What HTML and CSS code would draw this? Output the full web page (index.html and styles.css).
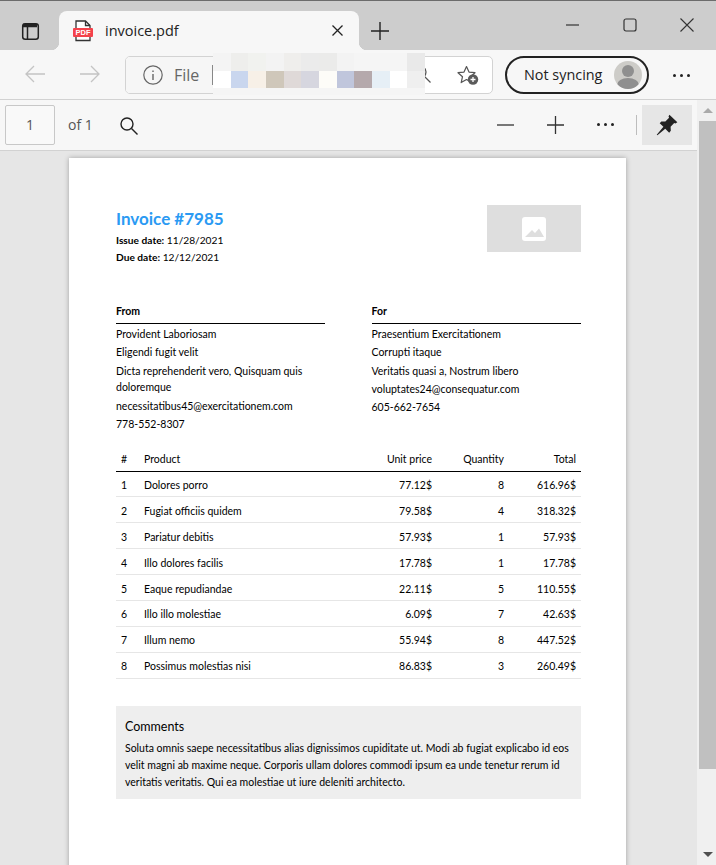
FILE: index.html
```html
<!DOCTYPE html>
<html lang="en">
<head>
    <meta charset="UTF-8">
    <title>invoice.pdf</title>
    <link rel="stylesheet" href="styles.css">
</head>
<body>
    <div class="titlebar">
        <div class="tab-actions">
            <svg width="20" height="20" viewBox="0 0 20 20" fill="none" stroke="#222" stroke-width="1.5"><rect x="2.7" y="2.7" width="15.6" height="15.6" rx="2.5"/><path d="M3 4.5h14" stroke-width="3.5"/><path d="M7.5 6v12"/></svg>
        </div>
        <div class="tab">
            <svg class="tab-icon" width="20" height="22" viewBox="0 0 20 22"><path d="M3 1h9.5L17 5.5V20.500H3z" fill="#fff" stroke="#333" stroke-width="1.300"/><path d="M12.500 1v4.500H17" fill="none" stroke="#333" stroke-width="1.300"/><rect x="0" y="8" width="20" height="9" rx="1" fill="#f4424b"/><text x="10" y="15.300" class="pdf-mark">PDF</text></svg>
            <span class="tab-title">invoice.pdf</span>
            <svg class="tab-close" width="11" height="11" viewBox="0 0 11 11" stroke="#222" stroke-width="1.300"><path d="M.5.5l10 10M10.500.5l-10 10"/></svg>
        </div>
        <svg class="new-tab" width="18" height="18" viewBox="0 0 18 18" stroke="#222" stroke-width="1.400"><path d="M9 0v18M0 9h18"/></svg>
        <div class="window-buttons">
            <svg width="14" height="14" viewBox="0 0 14 14" stroke="#333" stroke-width="1.200"><path d="M0 7h13"/></svg>
            <svg width="14" height="14" viewBox="0 0 14 14" fill="none" stroke="#333" stroke-width="1.200"><rect x="1" y="1" width="12" height="12" rx="2"/></svg>
            <svg width="14" height="14" viewBox="0 0 14 14" stroke="#333" stroke-width="1.100"><path d="M.5.5l13 13M13.500.5l-13 13"/></svg>
        </div>
    </div>

    <div class="toolbar">
        <svg class="nav-arrow" width="20" height="18" viewBox="0 0 20 18" fill="none" stroke="#c4c4c4" stroke-width="1.300"><path d="M20 9H1M9 1L1 9l8 8"/></svg>
        <svg class="nav-arrow" width="20" height="18" viewBox="0 0 20 18" fill="none" stroke="#c4c4c4" stroke-width="1.300"><path d="M0 9h19M11 1l8 8-8 8"/></svg>
        <div class="address">
            <div class="site-info">
                <svg width="20" height="20" viewBox="0 0 20 20" fill="none" stroke="#666" stroke-width="1.200"><circle cx="10" cy="10" r="9.200"/><path d="M10 9v6M10 5.500v1.500" stroke-width="1.400"/></svg>
                <span>File</span>
                <span class="site-sep"></span>
            </div>
            <div class="address-end">
                <svg class="addr-search" width="18" height="18" viewBox="0 0 18 18" fill="none" stroke="#555" stroke-width="1.300"><circle cx="7" cy="7" r="6"/><path d="M11.500 11.500l6 6"/></svg>
                <svg width="22" height="20" viewBox="0 0 22 20"><path d="M9.500 1.500l2.500 5.600 6 .6-4.500 4 1.300 5.900-5.300-3.100-5.300 3.100 1.300-5.900-4.500-4 6-.6z" fill="none" stroke="#555" stroke-width="1.200" stroke-linejoin="round"/><circle cx="16" cy="14.500" r="5.200" fill="#5a5a5a"/><path d="M16 12v5M13.500 14.500h5" stroke="#fff" stroke-width="1.300"/></svg>
            </div>
        </div>
        <div class="sync-pill">
            <span class="sync-label">Not syncing</span>
            <svg width="28" height="28" viewBox="0 0 28 28"><defs><clipPath id="avatar-clip"><circle cx="14" cy="14" r="14"/></clipPath></defs><circle cx="14" cy="14" r="14" fill="#cdccc8"/><g clip-path="url(#avatar-clip)" fill="#8f8f8f"><circle cx="14" cy="10" r="6"/><ellipse cx="14" cy="24" rx="11" ry="7"/></g></svg>
        </div>
        <div class="dots"><i></i><i></i><i></i></div>
        <div class="blur-patch" aria-hidden="true">
            <i class="c1"></i><i class="c2"></i><i class="c3"></i><i class="c4"></i><i class="c5"></i><i class="c6"></i><i class="c7"></i><i class="c4"></i><i class="c8"></i><i class="c8"></i><i class="c8"></i><i class="c9"></i>
            <i class="d1"></i><i class="d2"></i><i class="d3"></i><i class="d4"></i><i class="d5"></i><i class="d6"></i><i class="d7"></i><i class="d8"></i><i class="d9"></i><i class="d10"></i><i class="d1"></i><i class="d11"></i>
        </div>
    </div>

    <div class="workspace">
        <div class="pdf-column">
            <div class="pdf-toolbar">
                <div class="page-box">1</div>
                <span class="page-count">of 1</span>
                <svg class="pdf-search" width="18" height="18" viewBox="0 0 18 18" fill="none" stroke="#222" stroke-width="1.400"><circle cx="7" cy="7" r="6"/><path d="M11.500 11.500l6 6"/></svg>
                <div class="pdf-tools">
                    <svg width="17" height="18" viewBox="0 0 17 18" stroke="#333" stroke-width="1.300"><path d="M0 9h17"/></svg>
                    <svg width="17" height="18" viewBox="0 0 17 18" stroke="#333" stroke-width="1.300"><path d="M8.500 0v18M0 9h17"/></svg>
                    <div class="dots small"><i></i><i></i><i></i></div>
                    <span class="tool-sep"></span>
                    <div class="pin-button">
                        <svg width="24" height="24" viewBox="0 0 22 22" fill="#222"><path d="M13.200 1.500l7.300 7-1.800 1.200-1.100-.5-3.300 3.500.2 3.600-1.500 1.700-3.600-3.600-7.200 6.100-.6-.6 6.100-7.200-3.400-3.400 1.500-1.600 3.700.1 3.400-3.400-.5-1.100z"/></svg>
                    </div>
                </div>
            </div>

            <div class="viewer">
                <div class="sheet">
                    <div class="sheet-head">
                        <div>
                            <h1>Invoice #7985</h1>
                            <p><b>Issue date:</b> 11/28/2021</p>
                            <p><b>Due date:</b> 12/12/2021</p>
                        </div>
                        <div class="logo-box">
                            <svg width="24" height="24" viewBox="0 0 24 24"><rect width="24" height="24" rx="3" fill="#fff"/><path d="M3 20l7-7 3 3 4-4.500 5 8.500z" fill="#dedede"/></svg>
                        </div>
                    </div>

                    <div class="parties">
                        <div class="party">
                            <h2>From</h2>
                            <p>Provident Laboriosam</p>
                            <p>Eligendi fugit velit</p>
                            <p class="wrapped">Dicta reprehenderit vero, Quisquam quis doloremque</p>
                            <p>necessitatibus45@exercitationem.com</p>
                            <p>778-552-8307</p>
                        </div>
                        <div class="party">
                            <h2>For</h2>
                            <p>Praesentium Exercitationem</p>
                            <p>Corrupti itaque</p>
                            <p>Veritatis quasi a, Nostrum libero</p>
                            <p>voluptates24@consequatur.com</p>
                            <p>605-662-7654</p>
                        </div>
                    </div>

                    <table class="items">
                        <thead>
                            <tr>
                                <th class="col-num">#</th>
                                <th class="col-name">Product</th>
                                <th class="col-right">Unit price</th>
                                <th class="col-right col-qty">Quantity</th>
                                <th class="col-right col-total">Total</th>
                            </tr>
                        </thead>
                        <tbody>
                            <tr><td>1</td><td>Dolores porro</td><td class="col-right">77.12$</td><td class="col-right">8</td><td class="col-right">616.96$</td></tr>
                            <tr><td>2</td><td>Fugiat officiis quidem</td><td class="col-right">79.58$</td><td class="col-right">4</td><td class="col-right">318.32$</td></tr>
                            <tr><td>3</td><td>Pariatur debitis</td><td class="col-right">57.93$</td><td class="col-right">1</td><td class="col-right">57.93$</td></tr>
                            <tr><td>4</td><td>Illo dolores facilis</td><td class="col-right">17.78$</td><td class="col-right">1</td><td class="col-right">17.78$</td></tr>
                            <tr><td>5</td><td>Eaque repudiandae</td><td class="col-right">22.11$</td><td class="col-right">5</td><td class="col-right">110.55$</td></tr>
                            <tr><td>6</td><td>Illo illo molestiae</td><td class="col-right">6.09$</td><td class="col-right">7</td><td class="col-right">42.63$</td></tr>
                            <tr><td>7</td><td>Illum nemo</td><td class="col-right">55.94$</td><td class="col-right">8</td><td class="col-right">447.52$</td></tr>
                            <tr><td>8</td><td>Possimus molestias nisi</td><td class="col-right">86.83$</td><td class="col-right">3</td><td class="col-right">260.49$</td></tr>
                        </tbody>
                    </table>

                    <div class="comments">
                        <h3>Comments</h3>
                        <p>Soluta omnis saepe necessitatibus alias dignissimos cupiditate ut. Modi ab fugiat explicabo id eos velit magni ab maxime neque. Corporis ullam dolores commodi ipsum ea unde tenetur rerum id veritatis veritatis. Qui ea molestiae ut iure deleniti architecto.</p>
                    </div>
                </div>
            </div>
        </div>

        <div class="scrollbar">
            <div class="arrow-up"></div>
            <div class="thumb"></div>
            <div class="track"></div>
            <div class="arrow-down"></div>
        </div>
    </div>
</body>
</html>
```

FILE: styles.css
```css
* {
    box-sizing: border-box;
}
html, body {
    margin: 0;
    height: 865px;
    overflow: hidden;
}
body {
    display: flex;
    flex-direction: column;
    font-family: "Open Sans", sans-serif;
    color: #222;
    background-color: #e6e6e6;
}

/* title bar */
.titlebar {
    height: 50px;
    flex: none;
    display: flex;
    align-items: flex-end;
    background-color: #cdcdcd;
    border-top: 1px solid #6c6c6c;
}
.tab-actions {
    width: 59px;
    height: 39px;
    padding: 10px 0 0 20px;
}
.tab {
    position: relative;
    width: 300px;
    height: 39px;
    display: flex;
    align-items: center;
    background-color: #f7f7f7;
    border-radius: 8px 8px 0 0;
    padding: 0 16px 0 14px;
}
.tab::before,
.tab::after {
    content: "";
    position: absolute;
    bottom: 0;
    width: 8px;
    height: 8px;
}
.tab::before {
    left: -8px;
    background: radial-gradient(circle at 0 0, transparent 8px, #f7f7f7 8.5px);
}
.tab::after {
    right: -8px;
    background: radial-gradient(circle at 100% 0, transparent 8px, #f7f7f7 8.5px);
}
.tab-icon {
    margin-right: 12px;
}
.pdf-mark {
    font-family: "Liberation Sans", sans-serif;
    font-size: 7.500px;
    font-weight: 700;
    fill: #fff;
    text-anchor: middle;
}
.tab-title {
    font-size: 14.500px;
    flex: 1;
}
.new-tab {
    margin: 0 0 10px 12px;
}
.window-buttons {
    margin-left: auto;
    display: flex;
    gap: 43px;
    padding: 0 22px 18px 0;
}

/* browser toolbar */
.toolbar {
    position: relative;
    height: 50px;
    flex: none;
    display: flex;
    align-items: center;
    background-color: #f7f7f7;
    border-bottom: 1px solid #d2d2d2;
    padding: 1px 0 0 25px;
}
.nav-arrow {
    margin: -2px 35px 0 0;
}
.nav-arrow + .nav-arrow {
    margin-right: 25px;
}
.address {
    width: 368px;
    height: 38px;
    display: flex;
    justify-content: space-between;
    align-items: center;
    background-color: #fff;
    border: 1px solid #d3d3d3;
    border-radius: 5px;
    overflow: hidden;
}
.site-info {
    height: 100%;
    width: 88px;
    display: flex;
    align-items: center;
    gap: 11px;
    padding-left: 17px;
    font-size: 16px;
    color: #666;
    background-color: #f6f6f6;
}
.site-sep {
    width: 1px;
    height: 20px;
    margin-left: 2px;
    background-color: #888;
}
.address-end {
    padding-right: 13px;
    display: flex;
    align-items: center;
    gap: 26px;
}
.addr-search {
    margin-top: -3px;
}
.sync-pill {
    width: 144px;
    height: 38px;
    margin-left: 12px;
    display: flex;
    align-items: center;
    justify-content: space-between;
    padding: 0 5px 0 17px;
    border: 2px solid #222;
    border-radius: 19px;
    font-size: 14.400px;
}
.sync-label {
    margin-top: -2px;
}
.dots {
    display: flex;
    gap: 4px;
    margin-left: 24px;
}
.dots i {
    width: 3px;
    height: 3px;
    border-radius: 50%;
    background-color: #222;
}
.dots.small {
    margin-left: 0;
}
.blur-patch {
    position: absolute;
    left: 213px;
    top: 3px;
    width: 212px;
    height: 42px;
    display: grid;
    grid-template-columns: repeat(12, 1fr);
    grid-template-rows: 18px 17px;
    background-color: #f5f5f5;
}
.c1 { background-color: #f4f4f4; }
.c2 { background-color: #eeeeec; }
.c3 { background-color: #f1f2ef; }
.c4 { background-color: #f3f3f3; }
.c5 { background-color: #efeeec; }
.c6 { background-color: #ebebeb; }
.c7 { background-color: #ebebea; }
.c8 { background-color: #f5f5f5; }
.c9 { background-color: #e9e9e9; }
.d1 { background-color: #fff; }
.d2 { background-color: #c9d6ee; }
.d3 { background-color: #f7f0e7; }
.d4 { background-color: #cfc7ba; }
.d5 { background-color: #dfd9d8; }
.d6 { background-color: #d6d6df; }
.d7 { background-color: #fdfcf8; }
.d8 { background-color: #c0c6dc; }
.d9 { background-color: #b5a9ac; }
.d10 { background-color: #e6eff6; }
.d11 { background-color: #efefef; }

/* pdf area */
.workspace {
    flex: 1;
    min-height: 0;
    display: flex;
}
.pdf-column {
    flex: 1;
    min-width: 0;
    display: flex;
    flex-direction: column;
}
.pdf-toolbar {
    height: 51px;
    flex: none;
    display: flex;
    align-items: center;
    background-color: #f7f7f7;
    border-bottom: 1px solid #d2d2d2;
    padding: 0 5px 1px 5px;
}
.page-box {
    width: 50px;
    height: 40px;
    display: flex;
    align-items: center;
    justify-content: center;
    border: 1px solid #c8c8c8;
    border-radius: 2px;
    font-size: 14px;
    color: #555;
    background-color: #f9f9f9;
}
.page-count {
    margin-left: 13px;
    font-size: 14px;
    color: #555;
}
.pdf-search {
    margin: 3px 0 0 27px;
}
.pdf-tools {
    margin-left: auto;
    display: flex;
    align-items: center;
    gap: 33px;
}
.tool-sep {
    width: 1px;
    height: 20px;
    margin: 0 -28px 0 -11px;
    background-color: #bdbdbd;
}
.pin-button {
    width: 50px;
    height: 40px;
    display: flex;
    align-items: center;
    justify-content: center;
    background-color: #e6e6e6;
}
.viewer {
    flex: 1;
    min-height: 0;
    overflow: hidden;
    padding: 7px 0 0 69px;
}
.sheet {
    width: 557px;
    height: 900px;
    padding: 47px 45px 0 47px;
    background-color: #fff;
    box-shadow: 0 0 5px rgba(0, 0, 0, 0.3);
    font-family: Lato, sans-serif;
    font-size: 10.500px;
    color: #000;
}
.sheet p {
    margin: 0;
}
.sheet-head {
    display: flex;
    justify-content: space-between;
    height: 95px;
}
.sheet-head p {
    line-height: 17px;
    font-size: 10.200px;
}
.sheet-head h1 {
    margin: 3px 0 2px;
    font-size: 17px;
    line-height: 22px;
    font-weight: 700;
    color: #2b9af3;
}
.logo-box {
    width: 94px;
    height: 47px;
    display: flex;
    align-items: center;
    justify-content: center;
    background-color: #dedede;
}
.parties {
    display: grid;
    grid-template-columns: 209px 209.500px;
    column-gap: 46.500px;
    height: 145px;
    padding-top: 4px;
}
.party h2 {
    margin: 0 0 1px;
    padding-bottom: 5px;
    font-size: 10.500px;
    line-height: 14px;
    font-weight: 700;
    border-bottom: 1px solid #000;
}
.party p {
    line-height: 18.300px;
}
.party .wrapped {
    line-height: 16.500px;
    padding: 1px 0;
}
.items {
    width: 465px;
    border-collapse: collapse;
    table-layout: fixed;
}
.items th {
    height: 26px;
    font-weight: 400;
    text-align: left;
    border-bottom: 1px solid #000;
    padding: 2px 5px 0;
}
.items td {
    height: 25.900px;
    padding: 2px 5px 0;
    border-bottom: 1px solid #e6e6e6;
}
.items .col-right {
    text-align: right;
}
.col-num {
    width: 23px;
}
.col-qty,
.col-total {
    width: 72px;
}
.comments {
    margin-top: 27px;
    width: 465px;
    height: 93px;
    padding: 12px 9px 0;
    background-color: #eee;
}
.comments h3 {
    margin: 0 0 4px;
    font-size: 12.500px;
    line-height: 18px;
    font-weight: 400;
}
.comments p {
    line-height: 17px;
}

/* scrollbar */
.scrollbar {
    width: 19px;
    flex: none;
    display: flex;
    flex-direction: column;
    align-items: flex-end;
    background-color: #f0f0f0;
}
.arrow-up,
.arrow-down {
    width: 17px;
    height: 21px;
    display: flex;
    flex: none;
    justify-content: center;
    align-items: center;
}
.arrow-up::before,
.arrow-down::before {
    content: "";
    border-left: 5px solid transparent;
    border-right: 5px solid transparent;
}
.arrow-up::before {
    border-bottom: 5px solid #aaa;
}
.arrow-down::before {
    border-top: 5px solid #505050;
}
.thumb {
    width: 17px;
    height: 648px;
    flex: none;
    background-color: #c0c0c0;
}
.track {
    flex: 1;
}
```
